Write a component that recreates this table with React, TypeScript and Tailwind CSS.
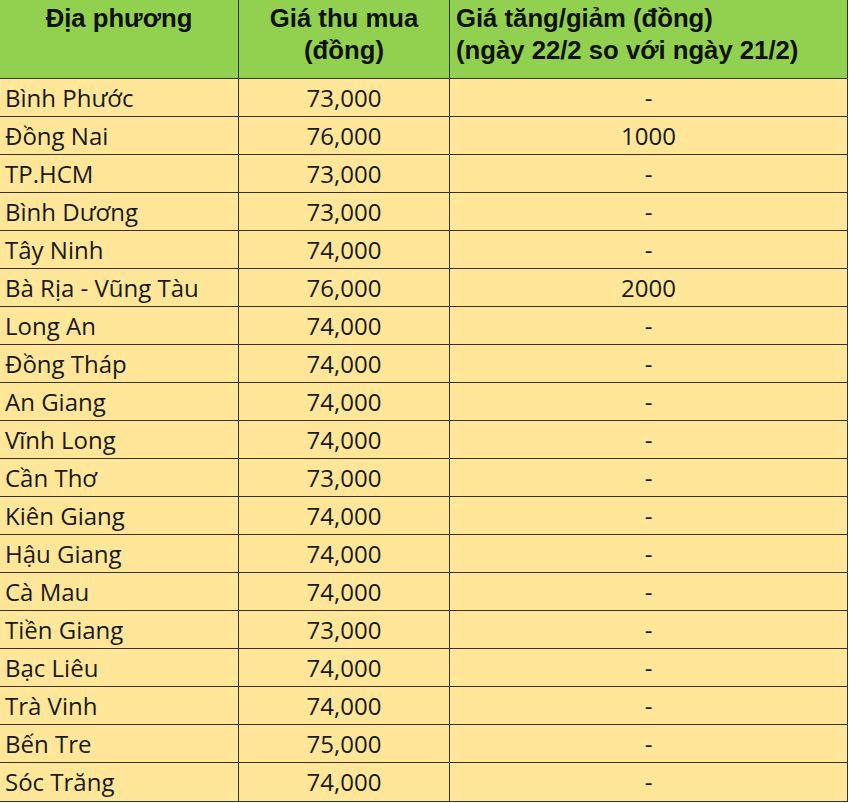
import * as React from "react";

const rows: [string, string, string][] = [
  ["Bình Phước", "73,000", "-"],
  ["Đồng Nai", "76,000", "1000"],
  ["TP.HCM", "73,000", "-"],
  ["Bình Dương", "73,000", "-"],
  ["Tây Ninh", "74,000", "-"],
  ["Bà Rịa - Vũng Tàu", "76,000", "2000"],
  ["Long An", "74,000", "-"],
  ["Đồng Tháp", "74,000", "-"],
  ["An Giang", "74,000", "-"],
  ["Vĩnh Long", "74,000", "-"],
  ["Cần Thơ", "73,000", "-"],
  ["Kiên Giang", "74,000", "-"],
  ["Hậu Giang", "74,000", "-"],
  ["Cà Mau", "74,000", "-"],
  ["Tiền Giang", "73,000", "-"],
  ["Bạc Liêu", "74,000", "-"],
  ["Trà Vinh", "74,000", "-"],
  ["Bến Tre", "75,000", "-"],
  ["Sóc Trăng", "74,000", "-"],
];

export default function App() {
  return (
    <div className="w-[850px] h-[803px] bg-white">
      <div className="w-[848px] border-r border-b border-[#333]">
        {/* header */}
        <div className="flex h-[79px] bg-[#92d050] border-b border-[#333] font-['Liberation_Sans',Arial,sans-serif] font-bold text-[25.7px] leading-[32px] text-[#111]">
          <div className="w-[239px] shrink-0 border-r border-[#333] text-center pt-[2px]">Địa phương</div>
          <div className="w-[211px] shrink-0 border-r border-[#333] text-center pt-[2px]">
            Giá thu mua
            <br />
            (đồng)
          </div>
          <div className="flex-1 pl-[6px] pt-[2px] whitespace-nowrap">
            Giá tăng/giảm (đồng)
            <br />
            (ngày 22/2 so với ngày 21/2)
          </div>
        </div>
        {rows.map(([place, price, change]) => (
          <div
            key={place}
            className="flex h-[38px] bg-[#ffe699] border-b border-[#333] last:border-b-0 font-['Open_Sans',sans-serif] text-[24px] leading-[38px] text-[#1a1a1a]"
          >
            <div className="w-[239px] shrink-0 border-r border-[#333] pl-[5px] whitespace-nowrap">{place}</div>
            <div className="w-[211px] shrink-0 border-r border-[#333] text-center">{price}</div>
            <div className="flex-1 text-center">{change}</div>
          </div>
        ))}
      </div>
    </div>
  );
}
